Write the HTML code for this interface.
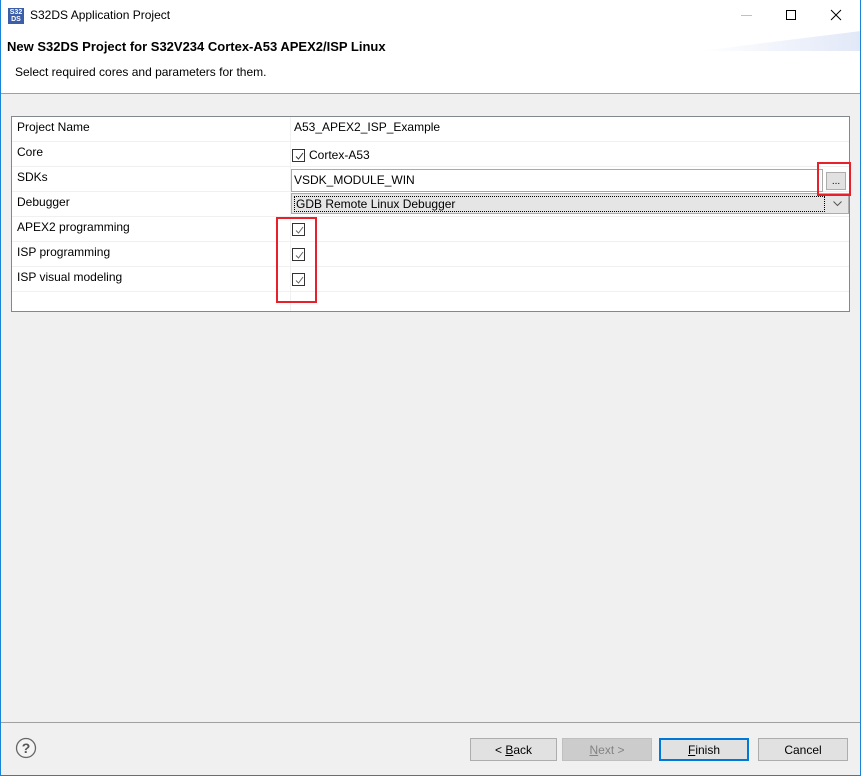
<!DOCTYPE html>
<html><head><meta charset="utf-8"><style>
*{box-sizing:border-box;margin:0;padding:0}
body{width:861px;height:776px;overflow:hidden;font-family:"Segoe UI","Liberation Sans",sans-serif;font-size:12px;color:#000;background:#fff;position:relative}
.win{position:absolute;left:0;top:0;width:861px;height:776px;background:#f0f0f0}
.title{position:absolute;left:0;top:0;width:861px;height:31px;background:#fff}
.hdr{position:absolute;left:0;top:31px;width:861px;height:63px;background:#fff;border-bottom:1px solid #a0a0a0}
.abs{position:absolute;white-space:nowrap}
.tbl{position:absolute;left:11px;top:116px;width:839px;height:196px;border:1px solid #828790;background:#fff}
.row{position:absolute;left:0;width:837px;height:25px;border-bottom:1px solid #f0f0f0}
.lbl{position:absolute;left:5px;top:3px}
.cb{position:absolute;width:13px;height:13px;border:1px solid #333;background:#fff}
.cb svg{position:absolute;left:1px;top:1px}
.btn{position:absolute;top:738px;height:23px;border:1px solid #adadad;background:#e1e1e1;text-align:center;line-height:22px}
.red{position:absolute;border:2px solid #e8202a}
</style></head><body>
<div class="win">
<div class="title">
 <div class="abs" style="left:8px;top:8px;width:16px;height:16px;background:#3b5ea8;color:#fff;font-size:7px;line-height:7px;font-weight:bold;text-align:center;padding-top:1px">S32<br>DS</div>
 <div class="abs" style="left:30px;top:8px;font-size:12px">S32DS Application Project</div>
 <div class="abs" style="left:741px;top:15px;width:11px;height:1px;background:#c0c0c0"></div>
 <div class="abs" style="left:786px;top:10px;width:10px;height:10px;border:1px solid #000"></div>
 <svg class="abs" style="left:830px;top:9px" width="12" height="12"><path d="M1 1L11 11M11 1L1 11" stroke="#000" stroke-width="1"/></svg>
</div>
<div class="hdr">
 <div class="abs" style="left:700px;top:0;width:161px;height:20px;background:linear-gradient(90deg,rgba(255,255,255,0),#e2e8f8);clip-path:polygon(0 100%,100% 0,100% 100%)"></div>
 <div class="abs" style="left:7px;top:8px;font-weight:bold;font-size:13px">New S32DS Project for S32V234 Cortex-A53 APEX2/ISP Linux</div>
 <div class="abs" style="left:15px;top:34px">Select required cores and parameters for them.</div>
</div>
<div class="tbl">
 <div class="abs" style="left:278px;top:0;width:1px;height:194px;background:#f0f0f0"></div>
 <div class="row" style="top:0"><span class="lbl">Project Name</span><span class="abs" style="left:282px;top:3px">A53_APEX2_ISP_Example</span></div>
 <div class="row" style="top:25px"><span class="lbl">Core</span>
  <div class="cb" style="left:280px;top:7px"><svg width="11" height="11"><path d="M2 5.5L4.5 8L9 2" stroke="#333" fill="none"/></svg></div>
  <span class="abs" style="left:297px;top:6px">Cortex-A53</span></div>
 <div class="row" style="top:50px"><span class="lbl">SDKs</span>
  <div class="abs" style="left:279px;top:2px;width:532px;height:23px;border:1px solid #aaa;background:#fff"><span class="abs" style="left:2px;top:3px">VSDK_MODULE_WIN</span></div>
  <div class="abs" style="left:814px;top:5px;width:20px;height:18px;border:1px solid #adadad;background:#e1e1e1;text-align:center;font-size:10px;line-height:18px">...</div></div>
 <div class="row" style="top:75px"><span class="lbl">Debugger</span>
  <div class="abs" style="left:279px;top:1px;width:558px;height:21px;border:1px solid #acacac;background:#e5e5e5">
   <div class="abs" style="left:2px;top:2px;width:531px;height:16px;border:1px dotted #000"></div>
   <span class="abs" style="left:4px;top:3px">GDB Remote Linux Debugger</span>
   <svg class="abs" style="left:541px;top:7px" width="9" height="6"><path d="M0.5 0.5L4.5 4.5L8.5 0.5" stroke="#555" fill="none"/></svg></div></div>
 <div class="row" style="top:100px"><span class="lbl">APEX2 programming</span><div class="cb" style="left:280px;top:6px"><svg width="11" height="11"><path d="M2 5.5L4.5 8L9 2" stroke="#666" fill="none"/></svg></div></div>
 <div class="row" style="top:125px"><span class="lbl">ISP programming</span><div class="cb" style="left:280px;top:6px"><svg width="11" height="11"><path d="M2 5.5L4.5 8L9 2" stroke="#666" fill="none"/></svg></div></div>
 <div class="row" style="top:150px"><span class="lbl">ISP visual modeling</span><div class="cb" style="left:280px;top:6px"><svg width="11" height="11"><path d="M2 5.5L4.5 8L9 2" stroke="#666" fill="none"/></svg></div></div>
</div>
<div class="red" style="left:276px;top:217px;width:41px;height:86px"></div>
<div class="red" style="left:817px;top:162px;width:34px;height:34px"></div>
<div class="abs" style="left:0;top:722px;width:861px;height:1px;background:#a0a0a0"></div>
<svg class="abs" style="left:15px;top:737px" width="22" height="22"><circle cx="11" cy="11" r="9.5" fill="#f4f4f4" stroke="#666" stroke-width="1.3"/><text x="11" y="16" text-anchor="middle" font-family="Liberation Sans,sans-serif" font-size="14" font-weight="bold" fill="#555">?</text></svg>
<div class="btn" style="left:470px;width:87px">&lt; <u>B</u>ack</div>
<div class="btn" style="left:562px;width:90px;border-color:#bfbfbf;background:#cccccc;color:#838383"><u>N</u>ext &gt;</div>
<div class="btn" style="left:659px;width:90px;border:2px solid #0078d7;line-height:20px"><u>F</u>inish</div>
<div class="btn" style="left:758px;width:90px">Cancel</div>
</div>
<div class="abs" style="left:0;top:0;width:1px;height:776px;background:#1883d7"></div>
<div class="abs" style="left:860px;top:0;width:1px;height:776px;background:#1883d7"></div>
<div class="abs" style="left:0;top:775px;width:861px;height:1px;background:#1883d7"></div>
</body></html>
